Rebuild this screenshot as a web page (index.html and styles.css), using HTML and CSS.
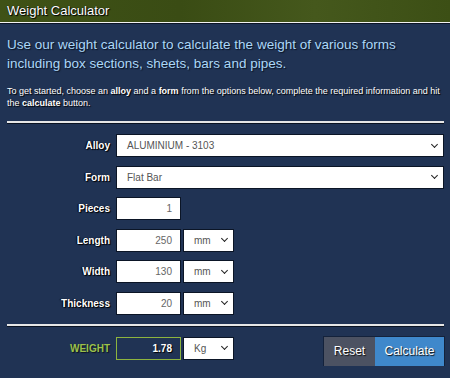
FILE: index.html
```html
<!DOCTYPE html>
<html lang="en">
<head>
  <meta charset="UTF-8">
  <title>Weight Calculator</title>
  <link rel="stylesheet" href="styles.css">
</head>
<body>
  <div class="topbar"><h1>Weight Calculator</h1></div>

  <div class="calc">
    <p class="lead">Use our weight calculator to calculate the weight of various forms including box sections, sheets, bars and pipes.</p>
    <p class="help">To get started, choose an <b>alloy</b> and a <b>form</b> from the options below, complete the required information and hit the <b>calculate</b> button.</p>

    <hr class="rule">

    <div class="row">
      <label>Alloy</label>
      <div class="sel wide"><span>ALUMINIUM - 3103</span><i></i></div>
    </div>
    <div class="row">
      <label>Form</label>
      <div class="sel wide"><span>Flat Bar</span><i></i></div>
    </div>
    <div class="row">
      <label>Pieces</label>
      <div class="num">1</div>
    </div>
    <div class="row">
      <label>Length</label>
      <div class="num">250</div>
      <div class="sel unit"><span>mm</span><i></i></div>
    </div>
    <div class="row">
      <label>Width</label>
      <div class="num">130</div>
      <div class="sel unit"><span>mm</span><i></i></div>
    </div>
    <div class="row">
      <label>Thickness</label>
      <div class="num">20</div>
      <div class="sel unit"><span>mm</span><i></i></div>
    </div>

    <hr class="rule bottom">

    <div class="result">
      <div class="row">
        <label class="weight">WEIGHT</label>
        <div class="num out">1.78</div>
        <div class="sel unit"><span>Kg</span><i></i></div>
      </div>
      <div class="buttons">
        <button class="reset">Reset</button><button class="go">Calculate</button>
      </div>
    </div>
  </div>
</body>
</html>
```

FILE: styles.css
```css
body { margin: 0; background: #203354; font-family: "Liberation Sans", Arial, sans-serif; color: #fff; }
.topbar { height: 22px; background: linear-gradient(90deg, #3f5216 0%, #3a4c14 40%, #45581c 70%, #3c4f15 100%); border-bottom: 1px solid #f2f2f2; box-shadow: 0 1px 0 #0c1526; }
.topbar h1 { margin: 0; padding: 3px 7px; font-size: 13px; font-weight: normal; line-height: 16px; text-shadow: 1px 1px 1px #000, 0 0 1px #000; }
.calc { padding: 0 6px 0 7px; }
.lead { margin: 12px 0 0; font-size: 13.5px; line-height: 19px; color: #acd7f7; text-shadow: 1px 1px 1px #0b1424; }
.help { margin: 12px 0 0; font-size: 9px; line-height: 12px; text-shadow: 1px 1px 1px #000; }
.help b { font-weight: bold; }
.rule { margin: 12px 0 11px; border: 0; border-top: 2px solid #e6e6e6; box-shadow: 0 1px 0 #0a1322; height: 0; }
.rule.bottom { margin: 3px 0 11px; }
.row { display: flex; align-items: center; gap: 2px; height: 23px; margin-bottom: 8.6px; }
.row label { width: 103px; margin-right: 4px; text-align: right; font-size: 10px; font-weight: bold; text-shadow: 1px 1px 1px #000, -1px 0 1px #000; }
.sel, .num { box-sizing: border-box; height: 23px; background: #fff; border: 1px solid #0b1526; font-size: 10px; color: #555; display: flex; align-items: center; }
.sel { justify-content: space-between; padding: 0 6px 0 10px; }
.sel i { width: 4px; height: 4px; border-right: 1px solid #222; border-bottom: 1px solid #222; transform: rotate(45deg); margin-top: -3px; }
.wide { flex: 1; }
.unit { width: 51px; }
.num { width: 65px; justify-content: flex-end; padding-right: 8px; color: #666; }
.result { display: flex; justify-content: space-between; align-items: flex-start; }
.result .row { margin: 0; }
.weight { color: #9cc24a; text-shadow: 1px 1px 1px #0a1322 !important; }
.out { background: #203354; border: 1px solid #8db43f; color: #fff; font-weight: bold; text-shadow: 1px 1px 1px #000; }
.buttons { display: flex; box-shadow: 0 0 0 1px #14223b; }
.buttons button { height: 29px; border: 0; font-family: inherit; font-size: 12px; color: #fff; text-shadow: 1px 1px 1px #111; padding: 0; }
.reset { width: 51px; background: #4c5262; }
.go { width: 69px; background: #3f88cb; }
```
